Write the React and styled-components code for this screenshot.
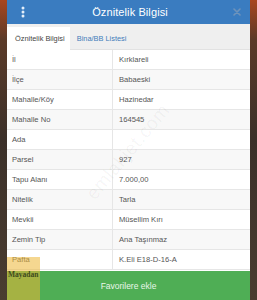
import React from "react";
import styled, { createGlobalStyle } from "styled-components";

const GlobalStyle = createGlobalStyle`
  html, body {
    margin: 0;
    padding: 0;
    width: 257px;
    height: 300px;
    overflow: hidden;
  }
  body {
    font-family: "Liberation Sans", Arial, sans-serif;
    background: #2a2624;
  }
`;

const Screen = styled.div`
  position: relative;
  width: 257px;
  height: 300px;
  display: flex;
  justify-content: center;
  background: linear-gradient(180deg, #a9461f 0px, #5a3a28 40px, #3b3029 140px, #4a3c30 300px);
  overflow: hidden;
`;

const Modal = styled.div`
  position: relative;
  width: 243px;
  height: 300px;
  display: flex;
  flex-direction: column;
  background: #fff;
  overflow: hidden;
`;

const Header = styled.div`
  height: 24px;
  flex-shrink: 0;
  display: flex;
  align-items: center;
  justify-content: space-between;
  padding: 0 9px 0 12px;
  background: #3a7cc0;
`;

const Title = styled.div`
  color: #fff;
  font-size: 11px;
  letter-spacing: 0.1px;
`;

const IconButton = styled.span`
  display: flex;
  align-items: center;
  justify-content: center;
  width: 8px;
  height: 14px;
`;

const TabBar = styled.div`
  height: 26px;
  flex-shrink: 0;
  display: flex;
  align-items: flex-end;
  background: #efefef;
  border-bottom: 1px solid #e2e2e2;
  box-sizing: border-box;
`;

const Tab = styled.div`
  height: ${(p) => (p.$active ? "23px" : "22px")};
  display: flex;
  align-items: center;
  padding-left: ${(p) => (p.$active ? "8px" : "7px")};
  padding-right: ${(p) => (p.$active ? "5px" : "8px")};
  font-size: 7.4px;
  color: ${(p) => (p.$active ? "#444" : "#3f7cba")};
  background: ${(p) => (p.$active ? "#fff" : "transparent")};
  margin-bottom: ${(p) => (p.$active ? "-1px" : "0")};
`;

const Table = styled.div`
  display: flex;
  flex-direction: column;
`;

const Row = styled.div`
  height: 20px;
  display: grid;
  grid-template-columns: 105px 1fr;
  background: ${(p) => (p.$striped ? "#f8f8f8" : "#fff")};
  border-bottom: 1px solid #e6e6e6;
  box-sizing: border-box;
  font-size: 7.6px;
  color: #555;
`;

const Cell = styled.div`
  display: flex;
  align-items: center;
  padding-left: ${(p) => (p.$value ? "6px" : "5px")};
  border-left: ${(p) => (p.$value ? "1px solid #e6e6e6" : "none")};
  white-space: nowrap;
`;

const FavButton = styled.button`
  margin-top: auto;
  height: 29px;
  flex-shrink: 0;
  border: none;
  background: #4fae55;
  color: #e9f6e9;
  font-family: "Liberation Sans", Arial, sans-serif;
  font-size: 8.5px;
  cursor: pointer;
`;

const Watermark = styled.div`
  position: absolute;
  left: 69px;
  top: 141px;
  transform: rotate(-50deg);
  font-size: 19px;
  color: rgba(0, 0, 0, 0.045);
  letter-spacing: 0.5px;
  pointer-events: none;
`;

const Sticker = styled.div`
  position: absolute;
  left: 7px;
  top: 257px;
  width: 33px;
  height: 43px;
  background: rgba(236, 182, 52, 0.55);
  pointer-events: none;
`;

const StickerText = styled.div`
  position: absolute;
  left: 8px;
  top: 270px;
  font-family: "Liberation Serif", "Times New Roman", serif;
  font-size: 7.5px;
  font-weight: bold;
  color: #3f4a1c;
  pointer-events: none;
`;

const rows = [
  ["İl", "Kırklareli"],
  ["İlçe", "Babaeski"],
  ["Mahalle/Köy", "Hazinedar"],
  ["Mahalle No", "164545"],
  ["Ada", ""],
  ["Parsel", "927"],
  ["Tapu Alanı", "7.000,00"],
  ["Nitelik", "Tarla"],
  ["Mevkii", "Müsellim Kırı"],
  ["Zemin Tip", "Ana Taşınmaz"],
  ["Pafta", "K.Eli E18-D-16-A"],
];

const MenuIcon = () => (
  <svg width="4" height="12" viewBox="0 0 4 12">
    <circle cx="2" cy="2" r="1.5" fill="#e3eef9" />
    <circle cx="2" cy="6" r="1.5" fill="#e3eef9" />
    <circle cx="2" cy="10" r="1.5" fill="#e3eef9" />
  </svg>
);

const CloseIcon = () => (
  <svg width="8" height="8" viewBox="0 0 8 8">
    <path d="M1 1L7 7M7 1L1 7" stroke="#6e93bb" strokeWidth="1.6" strokeLinecap="round" />
  </svg>
);

export default function App() {
  return (
    <>
      <GlobalStyle />
      <Screen>
        <Modal>
          <Header>
            <IconButton>
              <MenuIcon />
            </IconButton>
            <Title>Öznitelik Bilgisi</Title>
            <IconButton>
              <CloseIcon />
            </IconButton>
          </Header>
          <TabBar>
            <Tab $active>Öznitelik Bilgisi</Tab>
            <Tab>Bina/BB Listesi</Tab>
          </TabBar>
          <Table>
            {rows.map(([label, value], i) => (
              <Row key={label} $striped={i % 2 === 1}>
                <Cell>{label}</Cell>
                <Cell $value>{value}</Cell>
              </Row>
            ))}
          </Table>
          <FavButton>Favorilere ekle</FavButton>
        </Modal>
        <Watermark>emlakjet.com</Watermark>
        <Sticker />
        <StickerText>Mayadan</StickerText>
      </Screen>
    </>
  );
}
